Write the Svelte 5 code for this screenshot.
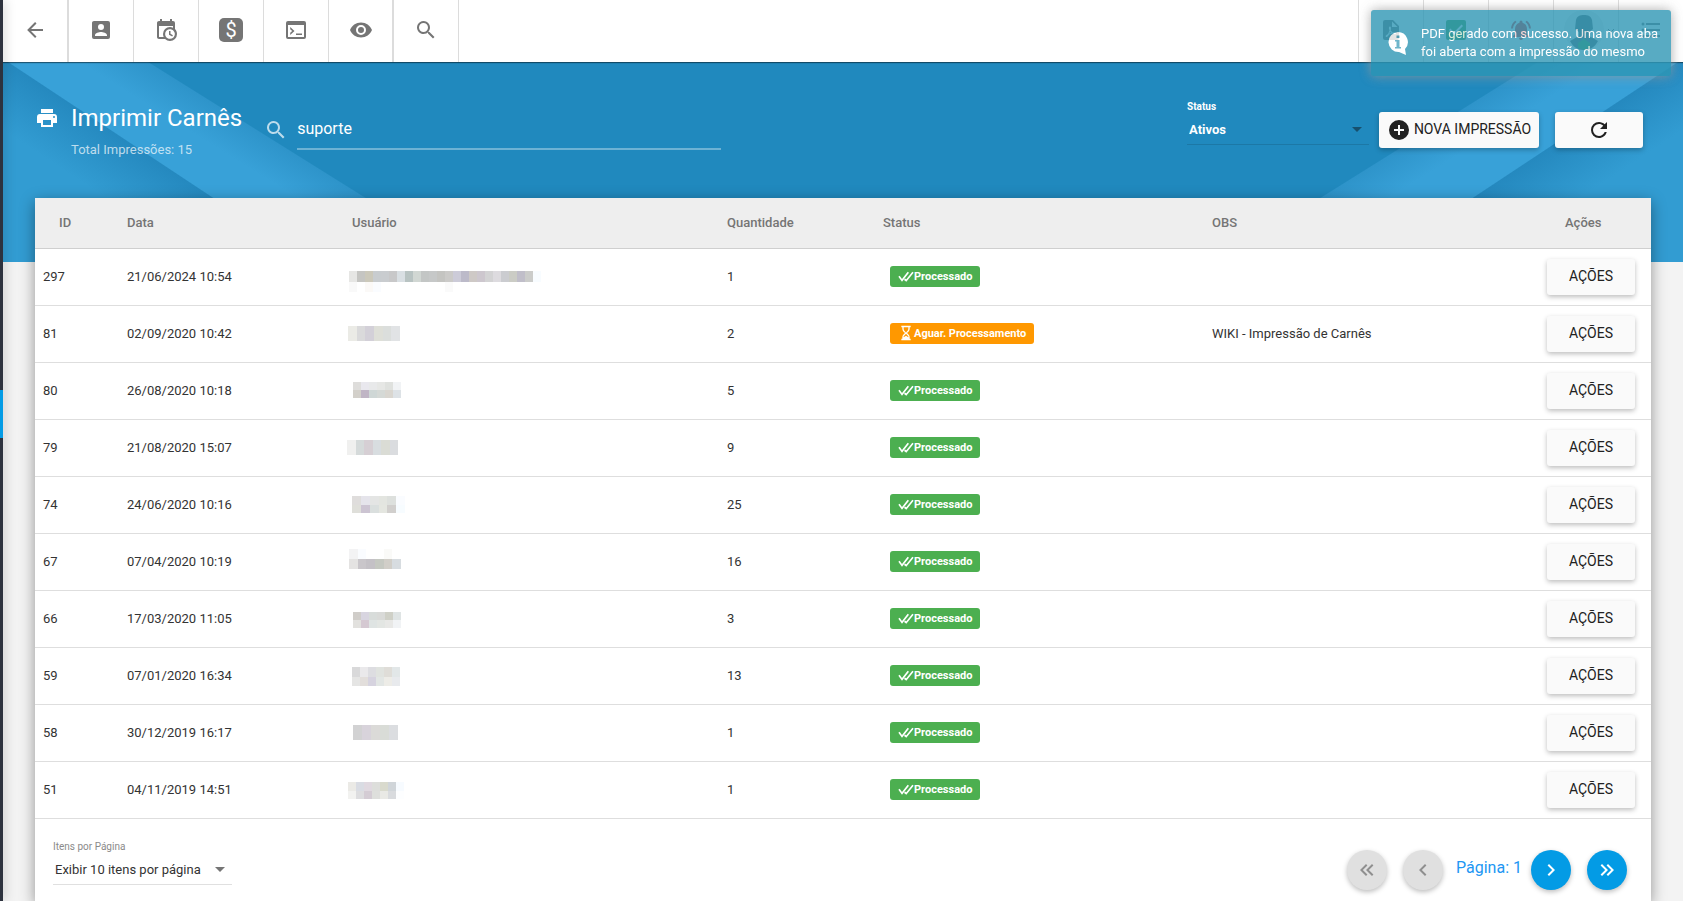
<script>
	let search = "suporte";
	let status = "Ativos";
	let perPage = 10;
	let page = 1;

	const icons = {
		back: "M20,11V13H8L13.5,18.5L12.08,19.92L4.16,12L12.08,4.08L13.5,5.5L8,11H20Z",
		account: "M6,17C6,15 10,13.9 12,13.9C14,13.9 18,15 18,17V18H6M15,9A3,3 0 0,1 12,12A3,3 0 0,1 9,9A3,3 0 0,1 12,6A3,3 0 0,1 15,9M3,5V19A2,2 0 0,0 5,21H19A2,2 0 0,0 21,19V5A2,2 0 0,0 19,3H5C3.89,3 3,3.9 3,5Z",
		calendar: "M15,13H16.5V15.82L18.94,17.23L18.19,18.53L15,16.69V13M19,8H5V19H9.67C9.24,18.09 9,17.07 9,16A7,7 0 0,1 16,9C17.07,9 18.09,9.24 19,9.67V8M5,21C3.89,21 3,20.1 3,19V5C3,3.89 3.89,3 5,3H6V1H8V3H16V1H18V3H19A2,2 0 0,1 21,5V11.1C22.24,12.36 23,14.09 23,16A7,7 0 0,1 16,23C14.09,23 12.36,22.24 11.1,21H5M16,11.15A4.85,4.85 0 0,0 11.15,16C11.15,18.68 13.32,20.85 16,20.85A4.85,4.85 0 0,0 20.85,16C20.85,13.32 18.68,11.15 16,11.15Z",
		console: "M4,3H20A2,2 0 0,1 22,5V19A2,2 0 0,1 20,21H4A2,2 0 0,1 2,19V5A2,2 0 0,1 4,3M4,7V19H20V7H4M12,17V15.5H18V17H12M6.2,9L10.5,13L6.2,17V14.8L8.2,13L6.2,11.2V9Z",
		eye: "M12,9A3,3 0 0,0 9,12A3,3 0 0,0 12,15A3,3 0 0,0 15,12A3,3 0 0,0 12,9M12,17A5,5 0 0,1 7,12A5,5 0 0,1 12,7A5,5 0 0,1 17,12A5,5 0 0,1 12,17M12,4.5C7,4.5 2.73,7.61 1,12C2.73,16.39 7,19.5 12,19.5C17,19.5 21.27,16.39 23,12C21.27,7.61 17,4.5 12,4.5Z",
		search: "M15.5,14H14.71L14.43,13.73A6.5,6.5 0 1,0 13.73,14.43L14,14.71V15.5L19,20.49L20.49,19L15.5,14M9.5,14A4.5,4.5 0 1,1 9.5,5A4.5,4.5 0 0,1 9.5,14Z",
		print: "M18,3H6V7H18M19,12A1,1 0 0,1 18,11A1,1 0 0,1 19,10A1,1 0 0,1 20,11A1,1 0 0,1 19,12M16,19H8V14H16M19,8H5A3,3 0 0,0 2,11V17H6V21H18V17H22V11A3,3 0 0,0 19,8Z",
		plus: "M17,13H13V17H11V13H7V11H11V7H13V11H17M12,2A10,10 0 0,0 2,12A10,10 0 0,0 12,22A10,10 0 0,0 22,12A10,10 0 0,0 12,2Z",
		refresh: "M17.65,6.35C16.2,4.9 14.21,4 12,4A8,8 0 0,0 4,12A8,8 0 0,0 12,20C15.73,20 18.84,17.45 19.73,14H17.65C16.83,16.33 14.61,18 12,18A6,6 0 0,1 6,12A6,6 0 0,1 12,6C13.66,6 15.14,6.69 16.22,7.78L13,11H20V4L17.65,6.35Z",
		pdf: "M14,2L20,8V20A2,2 0 0,1 18,22H6A2,2 0 0,1 4,20V4A2,2 0 0,1 6,2H14M13,3.5V9H18.5L13,3.5M10.9,8.5C10.1,8.5 9.7,9.4 10.1,11.1L10.6,12.6L9,16C7,17 6.3,18 6.8,18.7C7.5,19.5 8.6,18.7 10,16.4L13.4,15.5C15,16.5 16.8,16.6 17,15.7C17.2,14.7 15.5,14.4 13.6,14.6L11.7,12.4C12.1,10 12,8.6 10.9,8.5M11,13.7L12.4,15L10.3,15.5L11,13.7Z",
		check: "M4,2H20A2,2 0 0,1 22,4V20A2,2 0 0,1 20,22H4A2,2 0 0,1 2,20V4A2,2 0 0,1 4,2M10,17L19,8L17.6,6.6L10,14.2L6.4,10.6L5,12L10,17Z",
		bell: "M12,22A2,2 0 0,0 14,20H10A2,2 0 0,0 12,22M18,16V11C18,7.9 16.2,5.4 13.5,4.7V4A1.5,1.5 0 0,0 10.5,4V4.7C7.8,5.4 6,7.9 6,11V16L4,18V19H20V18L18,16M7.6,4.1L6.2,2.7C3.8,4.5 2.2,7.3 2,10.5H4C4.2,7.9 5.5,5.5 7.6,4.1M20,10.5H22C21.8,7.3 20.2,4.5 17.8,2.7L16.4,4.1C18.5,5.5 19.8,7.9 20,10.5Z",
		list: "M7,5H21V7H7V5M7,13V11H21V13H7M4,4.5A1.5,1.5 0 0,1 4,7.5A1.5,1.5 0 0,1 4,4.5M4,10.5A1.5,1.5 0 0,1 4,13.5A1.5,1.5 0 0,1 4,10.5M7,19V17H21V19H7M4,16.5A1.5,1.5 0 0,1 4,19.5A1.5,1.5 0 0,1 4,16.5Z",
		first: "M18.41,7.41L17,6L11,12L17,18L18.41,16.59L13.83,12L18.41,7.41M12.41,7.41L11,6L5,12L11,18L12.41,16.59L7.83,12L12.41,7.41Z",
		prev: "M15.41,16.58L10.83,12L15.41,7.41L14,6L8,12L14,18L15.41,16.58Z",
		next: "M8.59,16.58L13.17,12L8.59,7.41L10,6L16,12L10,18L8.59,16.58Z",
		last: "M5.59,7.41L7,6L13,12L7,18L5.59,16.59L10.17,12L5.59,7.41M11.59,7.41L13,6L19,12L13,18L11.59,16.59L16.17,12L11.59,7.41Z",
		doubleCheck: "M0.5,13L2.5,11.5L6,16.5L14.5,5.5L16.5,7L6,20.5L0.5,13M9,18L10.5,15.8L12.5,17L21.5,5.5L23.5,7L12.5,20.5L9,18Z",
		hourglass: "M5,1H19V3.5H17.5V6C17.5,9 15,10.5 13.5,12C15,13.5 17.5,15 17.5,18V20.5H19V23H5V20.5H6.5V18C6.5,15 9,13.5 10.5,12C9,10.5 6.5,9 6.5,6V3.5H5V1M8.5,3.5V6C8.5,8.5 11,9.5 12,11.5C13,9.5 15.5,8.5 15.5,6V3.5H8.5M12,13L8.5,17V18.5L12,16L15.5,18.5V17L12,13Z",
	};

	// x, width e bands: [y, altura, cores]
	const rows = [
		{
			id: 297, date: "21/06/2024 10:54", qty: 1, done: true, obs: "",
			mask: { x: 3, width: 192, bands: [
				[12, 11, "#e6e6e4 #c5c5c2 #cbc8ba #c8cccf #c9cccf #c8c8c9 #d9dfe3 #b8c3c2 #d1d7d3 #c3c6c5 #c6c8c8 #c4c4c1 #cbcac8 #cccbd8 #bcbac9 #cec9c6 #cdc7ce #d3d3d4 #dddbdf #cbccd0 #cbccc5 #c0bec9 #cbccca #f8fcff"],
				[23, 10, "#f9f9f9 #fff #fbf9f7 #fafcff #fff #fff #fff #fff #fff #fff #fff #fff #fafafa #fff #fff #fff #fff #fff #fff #fff #fff #fff #fff #fff"],
			] },
		},
		{
			id: 81, date: "02/09/2020 10:42", qty: 2, done: false, obs: "WIKI - Impressão de Carnês",
			mask: { x: 2, width: 52, bands: [[10, 15, "#ebebe6 #dadadb #d3d0d8 #dedfd8 #dbdedc #e1e3e5"]] },
		},
		{
			id: 80, date: "26/08/2020 10:18", qty: 5, done: true, obs: "",
			mask: { x: 7, width: 48, bands: [
				[9, 8, "#dedddb #e9e8ee #e8e9ea #e6e7e5 #dfe1de #f1f3f5"],
				[17, 8, "#d3d0ca #c0b5c5 #cfd7d6 #d5d9d6 #d9d6d0 #dde2e6"],
			] },
		},
		{
			id: 79, date: "21/08/2020 15:07", qty: 9, done: true, obs: "",
			mask: { x: 1, width: 51, bands: [[10, 15, "#f0f0ef #d5dada #d6cfd4 #d8dde0 #dadcd5 #dadcdf"]] },
		},
		{
			id: 74, date: "24/06/2020 10:16", qty: 25, done: true, obs: "",
			mask: { x: 6, width: 53, bands: [
				[9, 9, "#dfdddc #e5e4eb #e4e5e4 #e3e5e0 #dde0dd #fafcff"],
				[18, 8, "#dfdfda #ccc4d2 #dadfde #e4e6e0 #d1cfcd #f7fcff"],
			] },
		},
		{
			id: 67, date: "07/04/2020 10:19", qty: 16, done: true, obs: "",
			mask: { x: 3, width: 52, bands: [
				[5, 10, "#f3f3f4 #fafcff #fff #fff #fafaf8 #fff"],
				[15, 10, "#e4e3e2 #c9c6ca #c4c1c6 #c5c8c1 #d1cec8 #d7dce0"],
			] },
		},
		{
			id: 66, date: "17/03/2020 11:05", qty: 3, done: true, obs: "",
			mask: { x: 7, width: 48, bands: [
				[11, 8, "#d0cdc9 #d8d5e0 #d8dcda #d9dad8 #cfd0c7 #dfe4e4"],
				[19, 8, "#e2e1de #d5c9d2 #dfe4e3 #e3e6e3 #e8e8e6 #f1f3f5"],
			] },
		},
		{
			id: 59, date: "07/01/2020 16:34", qty: 13, done: true, obs: "",
			mask: { x: 6, width: 48, bands: [
				[9, 10, "#d9d9da #eae9eb #dddde1 #e0e3df #dfddd8 #e2e7e8"],
				[19, 9, "#e5e5e4 #e2dedb #d6d3df #e2e6e4 #edece7 #e8eaed"],
			] },
		},
		{
			id: 58, date: "30/12/2019 16:17", qty: 1, done: true, obs: "",
			mask: { x: 7, width: 45, bands: [[10, 15, "#d2d2d3 #d8d3db #dbdad8 #d9dcd7 #dbdde0"]] },
		},
		{
			id: 51, date: "04/11/2019 14:51", qty: 1, done: true, obs: "",
			mask: { x: 2, width: 56, bands: [
				[10, 9, "#ebeae6 #d9dce3 #e0d9e0 #dddedb #d9dacd #d0d5d9 #f7fbff"],
				[19, 8, "#f2f2f0 #dddddf #d4ccd4 #dedfdc #e9e9e5 #d9dbde #fdfeff"],
			] },
		},
	];

	const cells = (mask) =>
		mask.bands.flatMap(([y, height, colors]) => {
			const list = colors.split(" ");
			const width = mask.width / list.length;
			return list.map((fill, i) => ({ x: mask.x + i * width, y, width, height, fill }));
		});
</script>

{#snippet icon(name, size = 24)}
	<svg class="icon" width={size} height={size} viewBox="0 0 24 24" aria-hidden="true"><path d={icons[name]} /></svg>
{/snippet}

{#snippet arrow()}
	<svg class="arrow" width="10" height="5" viewBox="0 0 10 5" aria-hidden="true"><path d="M0 0H10L5 5Z" /></svg>
{/snippet}

<div class="app">
	<aside class="sidebar"><span class="active"></span></aside>

	<div class="page">
		<nav class="toolbar">
			<button class="tool first double" aria-label="Voltar">{@render icon("back")}</button>
			<button class="tool" aria-label="Clientes">{@render icon("account")}</button>
			<button class="tool" aria-label="Agenda">{@render icon("calendar")}</button>
			<button class="tool"><span class="money">$</span></button>
			<button class="tool" aria-label="Terminal">{@render icon("console")}</button>
			<button class="tool double" aria-label="Visualizar">{@render icon("eye")}</button>
			<button class="tool" aria-label="Buscar">{@render icon("search")}</button>

			<div class="tools-right">
				<button class="tool" aria-label="PDF">{@render icon("pdf")}</button>
				<button class="tool green" aria-label="Tarefas">{@render icon("check")}</button>
				<button class="tool red" aria-label="Alertas">{@render icon("bell")}</button>
				<button class="tool user" aria-label="Usuário">
					<svg width="40" height="40" viewBox="0 0 40 40" aria-hidden="true">
						<circle cx="20" cy="20" r="20" fill="#eee" />
						<path d="M11 19L12 10C13 6 16 5 20 5S27 6 28 10L29 19L25 22V26L34 31C31 37 26 40 20 40S9 37 6 31L15 26V22Z" fill="#5f6b70" />
						<path d="M14 33L20 29L26 33V38L20 40L14 38Z" fill="#43a047" />
					</svg>
					<svg width="8" height="5" viewBox="0 0 8 5" aria-hidden="true"><path d="M1 1L4 4L7 1" fill="none" stroke="#757575" /></svg>
				</button>
				<button class="tool" aria-label="Menu">{@render icon("list")}</button>
			</div>
		</nav>

		<header class="hero">
			<div class="heading">
				<div class="title">
					{@render icon("print")}
					<h1>Imprimir Carnês</h1>
				</div>
				<p>Total Impressões: 15</p>
			</div>

			<label class="search">
				{@render icon("search")}
				<input type="text" aria-label="Pesquisar" bind:value={search} />
			</label>

			<div class="field status">
				<label for="status">Status</label>
				<div class="select">
					<select id="status" bind:value={status}>
						<option>Ativos</option>
						<option>Inativos</option>
					</select>
					{@render arrow()}
				</div>
			</div>

			<button class="btn new">{@render icon("plus")}<span>NOVA IMPRESSÃO</span></button>
			<button class="btn refresh" aria-label="Atualizar">{@render icon("refresh")}</button>
		</header>

		<main class="card">
			<table>
				<colgroup>
					<col class="c-id" />
					<col class="c-date" />
					<col class="c-user" />
					<col class="c-qty" />
					<col class="c-status" />
					<col />
					<col class="c-actions" />
				</colgroup>
				<thead>
					<tr>
						<th>ID</th>
						<th>Data</th>
						<th>Usuário</th>
						<th>Quantidade</th>
						<th>Status</th>
						<th>OBS</th>
						<th>Ações</th>
					</tr>
				</thead>
				<tbody>
					{#each rows as row}
						<tr>
							<td>{row.id}</td>
							<td>{row.date}</td>
							<td class="user-cell">
								<svg class="mask" width="200" height="36" shape-rendering="crispEdges" aria-hidden="true">
									{#each cells(row.mask) as cell}
										<rect {...cell} />
									{/each}
								</svg>
							</td>
							<td>{row.qty}</td>
							<td class="status-cell">
								{#if row.done}
									<span class="badge">{@render icon("doubleCheck", 16)}Processado</span>
								{:else}
									<span class="badge waiting">{@render icon("hourglass", 16)}Aguar. Processamento</span>
								{/if}
							</td>
							<td>{row.obs}</td>
							<td class="actions"><button class="btn"><span>AÇÕES</span></button></td>
						</tr>
					{/each}
				</tbody>
			</table>

			<footer>
				<div class="field per-page">
					<label for="per-page">Itens por Página</label>
					<div class="select">
						<select id="per-page" bind:value={perPage}>
							{#each [10, 25, 50] as n}
								<option value={n}>Exibir {n} itens por página</option>
							{/each}
						</select>
						{@render arrow()}
					</div>
				</div>

				<div class="pagination">
					<div class="group">
						<button class="round" disabled aria-label="Primeira página">{@render icon("first")}</button>
						<button class="round" disabled aria-label="Página anterior">{@render icon("prev")}</button>
					</div>
					<span class="current">Página: {page}</span>
					<div class="group">
						<button class="round" aria-label="Próxima página">{@render icon("next")}</button>
						<button class="round" aria-label="Última página">{@render icon("last")}</button>
					</div>
				</div>
			</footer>
		</main>
	</div>

	<div class="toast" role="status">
		<svg width="20" height="25" viewBox="0 0 20 25" aria-hidden="true">
			<path d="M10 1A10 10 0 0 1 17 18L18 24L11 21A10 10 0 1 1 10 1Z" fill="#fff" />
			<path d="M8.5 4.5H11.5V7H8.5ZM7 9H11.5V16H13V17.5H7V16H8.5V10.5H7Z" fill="#4ba4be" />
		</svg>
		<span>PDF gerado com sucesso. Uma nova aba foi aberta com a impressão do mesmo</span>
	</div>
</div>

<style>
	:global(body) {
		background: #f3f3f3;
	}
	.app {
		display: flex;
		min-height: 100vh;
		font-family: Roboto, "Liberation Sans", sans-serif;
		font-size: 13px;
		color: #333;
	}
	button,
	input,
	select {
		font-family: inherit;
		padding: 0;
		margin: 0;
		border: none;
		outline: none;
		background: none;
	}
	button {
		cursor: pointer;
	}
	.icon {
		display: block;
		flex: none;
		fill: currentColor;
	}
	.sidebar {
		flex: none;
		width: 3px;
		background: #2d323e;
		z-index: 3;
		box-shadow: 0 0 12px rgba(0, 0, 0, 0.4);
	}
	.active {
		display: block;
		height: 48px;
		margin-top: 390px;
		background: #039be5;
	}
	.page {
		flex: 1;
		min-width: 0;
		display: flex;
		flex-direction: column;
	}

	/* toolbar */
	.toolbar {
		display: flex;
		height: 62px;
		background: white;
		position: relative;
		z-index: 1;
		box-shadow: 0 1px 1px rgba(0, 0, 0, 0.45);
	}
	.tool {
		display: flex;
		align-items: center;
		justify-content: center;
		width: 65px;
		padding-bottom: 2px;
		box-sizing: border-box;
		color: #757575;
		border-right: 1px solid #dcdcdc;
	}
	.tool.first {
		width: 66px;
	}
	.tool.double {
		border-right-width: 2px;
	}
	.money {
		width: 24px;
		height: 24px;
		line-height: 24px;
		border-radius: 5px;
		background: #757575;
		color: white;
		font-size: 20px;
	}
	.tools-right {
		display: flex;
		margin-left: auto;
	}
	.tools-right .tool {
		border-right: none;
		border-left: 1px solid #dcdcdc;
	}
	.green {
		color: #43a047;
	}
	.red {
		color: #e53935;
	}
	.user {
		gap: 3px;
		padding-left: 6px;
	}

	/* cabeçalho azul */
	.hero {
		display: flex;
		align-items: center;
		height: 200px;
		box-sizing: border-box;
		padding: 40px 40px 104px 32px;
		color: white;
		background:
			linear-gradient(33.5deg, #329cd2 110px, #2589bf 169px, transparent 170px) left / 480px 200px no-repeat,
			linear-gradient(-33.5deg, #329cd2 110px, #2589bf 169px, transparent 170px) right / 480px 200px no-repeat,
			linear-gradient(32deg, #38a1d8 210px, #2e94ca 246px, transparent 247px) left / 480px 200px no-repeat,
			linear-gradient(-32deg, #38a1d8 210px, #2e94ca 246px, transparent 247px) right / 480px 200px no-repeat,
			#2089be;
	}
	.title {
		display: flex;
		align-items: center;
		gap: 12px;
	}
	h1 {
		margin: 0;
		font-size: 24px;
		font-weight: 400;
		line-height: 32px;
		white-space: nowrap;
	}
	.heading p {
		margin: 8px 0 0 36px;
		line-height: 16px;
		color: rgba(255, 255, 255, 0.7);
	}
	.search {
		display: flex;
		align-items: center;
		gap: 9px;
		flex: 0 1 457px;
		margin-left: 22px;
		color: rgba(255, 255, 255, 0.7);
	}
	.search input {
		flex: 1;
		min-width: 0;
		height: 40px;
		box-sizing: border-box;
		padding-bottom: 2px;
		font-size: 16px;
		color: white;
		border-bottom: 2px solid rgba(255, 255, 255, 0.35);
	}
	.field {
		display: flex;
		flex-direction: column;
		padding-bottom: 14px;
	}
	.field label {
		font-size: 10px;
		line-height: 12px;
	}
	.select {
		display: grid;
		align-items: center;
	}
	.select select,
	.arrow {
		grid-area: 1 / 1;
	}
	.select select {
		appearance: none;
		height: 32px;
		padding: 2px 24px 0 2px;
		font-size: 13px;
		color: inherit;
		border-bottom: 1px solid rgba(0, 0, 0, 0.12);
	}
	.select option {
		color: #333;
	}
	.arrow {
		justify-self: end;
		margin-right: 7px;
		fill: #757575;
		pointer-events: none;
	}
	.status {
		width: 182px;
		margin: 0 10px 0 auto;
		font-weight: 700;
	}
	.status select {
		font-weight: 700;
	}
	.status .arrow {
		fill: #17506e;
	}
	.btn {
		display: inline-flex;
		align-items: center;
		justify-content: center;
		min-width: 88px;
		height: 36px;
		font-size: 14px;
		color: #212121;
		background: #fafafa;
		border-radius: 3px;
		box-shadow: 0 2px 5px rgba(0, 0, 0, 0.26);
	}
	.btn span {
		padding-bottom: 2px;
	}
	.new {
		width: 160px;
		gap: 3px;
		margin-right: 16px;
		white-space: nowrap;
	}

	/* tabela */
	.card {
		flex: 1;
		margin: -64px 32px 0;
		background: white;
		box-shadow: 0 4px 14px rgba(0, 0, 0, 0.4);
	}
	table {
		width: 100%;
		table-layout: fixed;
		border-collapse: separate;
		border-spacing: 0;
	}
	.c-id {
		width: 84px;
	}
	.c-date {
		width: 225px;
	}
	.c-user {
		width: 375px;
	}
	.c-qty {
		width: 156px;
	}
	.c-status {
		width: 329px;
	}
	.c-actions {
		width: 112px;
	}
	th {
		height: 48px;
		padding: 0 8px 2px;
		text-align: left;
		font-weight: 500;
		color: #757575;
		background: #eee;
		border-bottom: 1px solid #cfcfcf;
	}
	th:first-child {
		padding-left: 24px;
	}
	th:last-child {
		padding-left: 26px;
	}
	td {
		height: 54px;
		padding: 0 8px 2px;
		border-bottom: 1px solid #dedede;
	}
	.user-cell {
		height: 56px;
		padding: 0 2px;
	}
	.mask {
		display: block;
	}
	.status-cell {
		padding-left: 15px;
	}
	.badge {
		display: inline-flex;
		align-items: center;
		height: 21px;
		padding: 0 8px;
		border-radius: 3px;
		font-size: 11px;
		font-weight: 700;
		color: white;
		background: #4caf50;
		vertical-align: middle;
	}
	.badge.waiting {
		background: #ff9800;
	}
	.actions {
		height: 56px;
		text-align: right;
		padding: 0 16px 0 0;
	}

	footer {
		display: flex;
		align-items: center;
		justify-content: space-between;
		padding: 22px 24px 0 18px;
	}
	.per-page {
		width: 179px;
	}
	.per-page label {
		color: #8a8a8a;
	}
	.pagination {
		display: flex;
		align-items: center;
		gap: 9px;
	}
	.group {
		display: flex;
		gap: 16px;
	}
	.round {
		display: flex;
		align-items: center;
		justify-content: center;
		width: 40px;
		height: 40px;
		border-radius: 50%;
		color: white;
		background: #039be5;
		box-shadow: 0 2px 5px rgba(0, 0, 0, 0.26);
	}
	.round:disabled {
		color: #8f8f8f;
		background: #e0e0e0;
	}
	.current {
		padding: 0 0 6px 4px;
		font-size: 16px;
		color: #2196f3;
	}

	/* aviso sobreposto */
	.toast {
		position: fixed;
		top: 10px;
		right: 12px;
		z-index: 10;
		display: flex;
		align-items: center;
		gap: 13px;
		width: 300px;
		box-sizing: border-box;
		padding: 15px 8px 15px 17px;
		border-radius: 3px;
		line-height: 18px;
		color: white;
		background: #2f96b4;
		opacity: 0.8;
		box-shadow: 0 0 12px #999;
	}
	.toast svg {
		flex: none;
	}
</style>
